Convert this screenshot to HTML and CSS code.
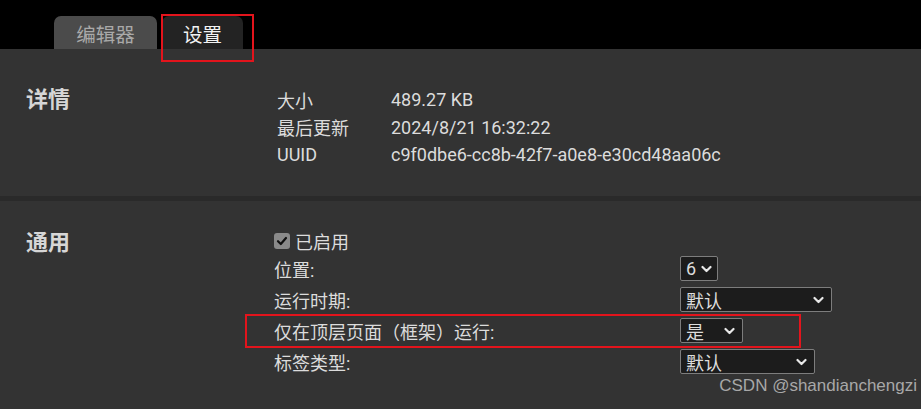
FILE: index.html
```html
<!DOCTYPE html>
<html lang="zh">
<head>
<meta charset="utf-8">
<link rel="stylesheet" href="styles.css">
</head>
<body>
<div class="page">
  <div class="tabbar">
    <div class="tab tab-inactive">编辑器</div>
    <div class="tab tab-active">设置</div>
  </div>
  <section class="section section-details">
    <h2 class="heading">详情</h2>
    <div class="details">
      <div class="drow"><span class="dkey">大小</span><span class="dval">489.27 KB</span></div>
      <div class="drow"><span class="dkey">最后更新</span><span class="dval">2024/8/21 16:32:22</span></div>
      <div class="drow"><span class="dkey">UUID</span><span class="dval">c9f0dbe6-cc8b-42f7-a0e8-e30cd48aa06c</span></div>
    </div>
  </section>
  <div class="divider"></div>
  <section class="section section-general">
    <h2 class="heading">通用</h2>
    <div class="options">
      <div class="orow orow-check">
        <span class="checkbox"><svg width="12" height="12" viewBox="0 0 12 12"><path d="M2 6.2 L4.8 9 L10 3" fill="none" stroke="#111" stroke-width="2.2" stroke-linecap="round" stroke-linejoin="round"/></svg></span>
        <span class="olabel">已启用</span>
      </div>
      <div class="orow">
        <span class="okey">位置:</span>
        <span class="select sel-pos">6<svg class="chev" width="11" height="8" viewBox="0 0 11 8"><path d="M1.5 2 L5.5 6 L9.5 2" fill="none" stroke="#e8e8e8" stroke-width="2.2" stroke-linecap="round" stroke-linejoin="round"/></svg></span>
      </div>
      <div class="orow">
        <span class="okey">运行时期:</span>
        <span class="select sel-run">默认<svg class="chev" width="11" height="8" viewBox="0 0 11 8"><path d="M1.5 2 L5.5 6 L9.5 2" fill="none" stroke="#e8e8e8" stroke-width="2.2" stroke-linecap="round" stroke-linejoin="round"/></svg></span>
      </div>
      <div class="orow">
        <span class="okey">仅在顶层页面（框架）运行:</span>
        <span class="select sel-top">是<svg class="chev" width="11" height="8" viewBox="0 0 11 8"><path d="M1.5 2 L5.5 6 L9.5 2" fill="none" stroke="#e8e8e8" stroke-width="2.2" stroke-linecap="round" stroke-linejoin="round"/></svg></span>
      </div>
      <div class="orow">
        <span class="okey">标签类型:</span>
        <span class="select sel-tab">默认<svg class="chev" width="11" height="8" viewBox="0 0 11 8"><path d="M1.5 2 L5.5 6 L9.5 2" fill="none" stroke="#e8e8e8" stroke-width="2.2" stroke-linecap="round" stroke-linejoin="round"/></svg></span>
      </div>
    </div>
  </section>
  <div class="watermark">CSDN @shandianchengzi</div>
  <div class="mark mark-tab"></div>
  <div class="mark mark-row"></div>
</div>
</body>
</html>
```
FILE: styles.css
```css
html, body {
  margin: 0;
  padding: 0;
  background: #333333;
}
body {
  font-family: Roboto, "Noto Sans CJK SC", sans-serif;
  color: #dcdcdc;
  font-size: 18px;
}
.page {
  position: relative;
  width: 921px;
  height: 409px;
  overflow: hidden;
  background: #333333;
}
.tabbar {
  height: 49px;
  background: #000;
  display: flex;
  align-items: flex-end;
  padding-left: 54px;
  gap: 5px;
  box-sizing: border-box;
}
.tab {
  height: 33px;
  border-radius: 7px 7px 0 0;
  display: flex;
  align-items: center;
  justify-content: center;
  font-size: 19.5px;
  box-sizing: border-box;
  padding-top: 2px;
}
.tab-inactive {
  width: 103px;
  background: #4b4b4b;
  color: #a9a9a9;
}
.tab-active {
  width: 81px;
  background: #232323;
  color: #f2f2f2;
}
.section {
  display: flex;
  padding-left: 26px;
  box-sizing: border-box;
}
.section-details {
  height: 147px;
  padding-top: 37px;
}
.section-general {
  padding-top: 28px;
}
.heading {
  margin: 0;
  width: 251px;
  flex: none;
  font-size: 22px;
  font-weight: bold;
  line-height: 28px;
  color: #d6d6d6;
}
.details {
  display: flex;
  flex-direction: column;
}
.drow {
  display: flex;
  height: 27.5px;
  align-items: center;
}
.dkey {
  width: 114px;
  color: #dcdcdc;
}
.dval {
  color: #dcdcdc;
}
.divider {
  height: 5px;
  background: #2a2a2a;
}
.options {
  display: flex;
  flex-direction: column;
  margin-left: -3px;
}
.orow {
  display: flex;
  align-items: center;
  height: 31px;
}
.orow-check {
  height: 24px;
}
.checkbox {
  width: 16px;
  height: 16px;
  border-radius: 3px;
  background: #8a8a8a;
  display: flex;
  align-items: center;
  justify-content: center;
  margin-right: 5px;
}
.okey {
  width: 406px;
  flex: none;
}
.select {
  height: 25px;
  box-sizing: border-box;
  border: 1px solid #7d7d7d;
  border-radius: 2px;
  background: #1c1c1c;
  color: #dcdcdc;
  display: flex;
  align-items: center;
  justify-content: space-between;
  padding: 0 7px 0 5px;
  font-size: 18px;
}
.sel-pos { width: 38px; padding-right: 5px; }
.sel-run { width: 152px; }
.sel-top { width: 63px; }
.sel-tab { width: 135px; }
.chev { flex: none; }
.watermark {
  position: absolute;
  right: 4px;
  top: 376px;
  font-family: "Liberation Sans", Arial, sans-serif;
  font-size: 17px;
  color: #a8a8a8;
}
.mark {
  position: absolute;
  border: 2px solid #e3141c;
  box-sizing: border-box;
}
.mark-tab {
  left: 161px;
  top: 14px;
  width: 93px;
  height: 48px;
}
.mark-row {
  left: 245px;
  top: 314px;
  width: 556px;
  height: 34px;
}
```
